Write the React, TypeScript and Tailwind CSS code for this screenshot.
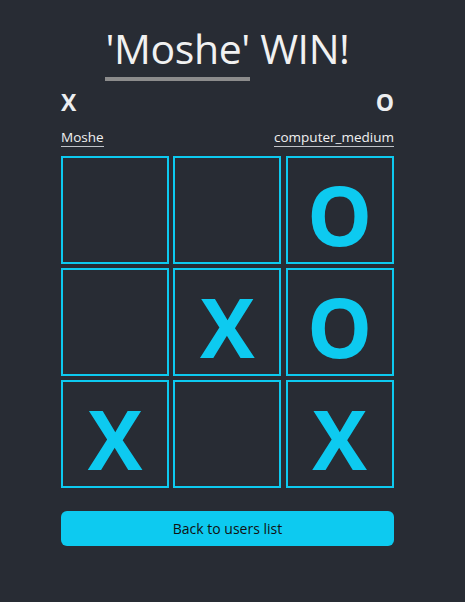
import React from "react";

const board = ["", "", "O", "", "X", "O", "X", "", "X"];

export default function App() {
  return (
    <div className="min-h-[602px] w-full bg-[#282c34] text-[#f1f1f1]" style={{ fontFamily: '"Open Sans", "Noto Sans", sans-serif' }}>
      <div className="ml-[61px] w-[333px] pt-[20px]">
        <h1 className="text-center text-[41px] leading-[56px] font-normal tracking-[-0.4px]">
          <span className="border-b-[4px] border-[#8c8c8c] pb-[1px]">'Moshe'</span> WIN!
        </h1>
        <div className="mt-[14px] flex justify-between text-[23px] font-bold leading-[24px] text-[#eceef0]">
          <span>X</span>
          <span>O</span>
        </div>
        <div className="mt-[14px] flex justify-between text-[13.5px] leading-[18px]">
          <span className="border-b border-[#bfc3c8]">Moshe</span>
          <span className="border-b border-[#bfc3c8]">computer_medium</span>
        </div>
        <div className="mt-[9px] grid grid-cols-3 gap-[4px]">
          {board.map((v, i) => (
            <div key={i} className="flex h-[108px] w-[108px] items-center justify-center border-2 border-[#0dcaf0] pt-[8px] text-[82px] font-bold leading-none text-[#0dcaf0]">
              {v}
            </div>
          ))}
        </div>
        <button className="mt-[23px] h-[35px] w-full rounded-[6px] bg-[#0dcaf0] text-[14px] text-[#111]">
          Back to users list
        </button>
      </div>
    </div>
  );
}
